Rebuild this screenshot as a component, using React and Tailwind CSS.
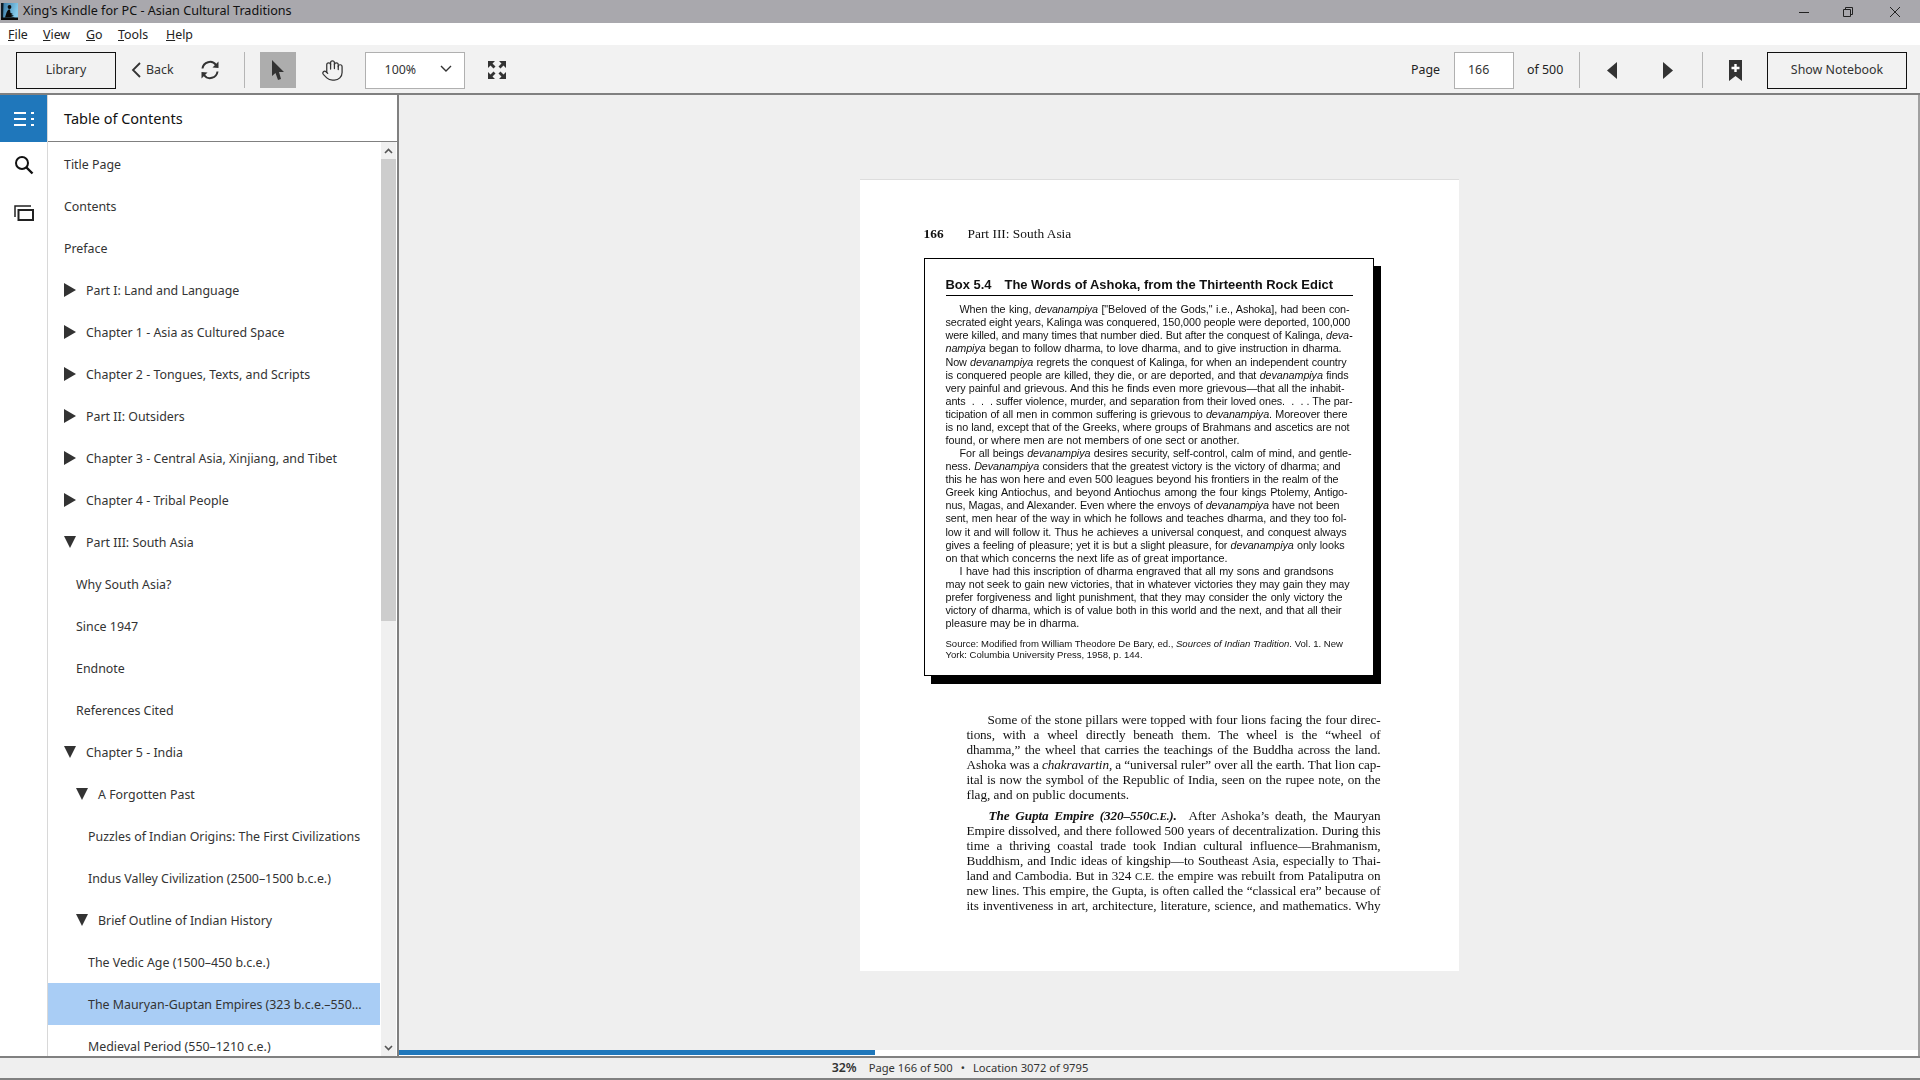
import React from 'react';
import { Hand } from 'lucide-react';

const tocItems = [
  { label: 'Title Page', pad: 'pl-[16px]' },
  { label: 'Contents', pad: 'pl-[16px]' },
  { label: 'Preface', pad: 'pl-[16px]' },
  { label: 'Part I: Land and Language', pad: 'pl-[16px]', arrow: 'right' },
  { label: 'Chapter 1 - Asia as Cultured Space', pad: 'pl-[16px]', arrow: 'right' },
  { label: 'Chapter 2 - Tongues, Texts, and Scripts', pad: 'pl-[16px]', arrow: 'right' },
  { label: 'Part II: Outsiders', pad: 'pl-[16px]', arrow: 'right' },
  { label: 'Chapter 3 - Central Asia, Xinjiang, and Tibet', pad: 'pl-[16px]', arrow: 'right' },
  { label: 'Chapter 4 - Tribal People', pad: 'pl-[16px]', arrow: 'right' },
  { label: 'Part III: South Asia', pad: 'pl-[16px]', arrow: 'down' },
  { label: 'Why South Asia?', pad: 'pl-[28px]' },
  { label: 'Since 1947', pad: 'pl-[28px]' },
  { label: 'Endnote', pad: 'pl-[28px]' },
  { label: 'References Cited', pad: 'pl-[28px]' },
  { label: 'Chapter 5 - India', pad: 'pl-[16px]', arrow: 'down' },
  { label: 'A Forgotten Past', pad: 'pl-[28px]', arrow: 'down' },
  { label: 'Puzzles of Indian Origins: The First Civilizations', pad: 'pl-[40px]' },
  { label: 'Indus Valley Civilization (2500–1500 b.c.e.)', pad: 'pl-[40px]' },
  { label: 'Brief Outline of Indian History', pad: 'pl-[28px]', arrow: 'down' },
  { label: 'The Vedic Age (1500–450 b.c.e.)', pad: 'pl-[40px]' },
  { label: 'The Mauryan-Guptan Empires (323 b.c.e.–550...', pad: 'pl-[40px]', active: true },
  { label: 'Medieval Period (550–1210 c.e.)', pad: 'pl-[40px]' },
];

// right edge of each printed line, in px from the left of the box text
const boxLines = [
  { w: 404, indent: true, c: <>When the king, <i>devanampiya</i> ["Beloved of the Gods," i.e., Ashoka], had been con-</> },
  { w: 404, c: <>secrated eight years, Kalinga was conquered, 150,000 people were deported, 100,000</> },
  { w: 407, c: <>were killed, and many times that number died. But after the conquest of Kalinga, <i>deva-</i></> },
  { w: 396, c: <><i>nampiya</i> began to follow dharma, to love dharma, and to give instruction in dharma.</> },
  { w: 401, gap: true, c: <>Now <i>devanampiya</i> regrets the conquest of Kalinga, for when an independent country</> },
  { w: 403, c: <>is conquered people are killed, they die, or are deported, and that <i>devanampiya</i> finds</> },
  { w: 399, c: <>very painful and grievous. And this he finds even more grievous—that all the inhabit-</> },
  { w: 407, c: <>ants &nbsp;. &nbsp;. &nbsp;. suffer violence, murder, and separation from their loved ones. &nbsp;. &nbsp;. . The par-</> },
  { w: 402, c: <>ticipation of all men in common suffering is grievous to <i>devanampiya</i>. Moreover there</> },
  { w: 404, c: <>is no land, except that of the Greeks, where groups of Brahmans and ascetics are not</> },
  { c: <>found, or where men are not members of one sect or another.</> },
  { w: 406, indent: true, c: <>For all beings <i>devanampiya</i> desires security, self-control, calm of mind, and gentle-</> },
  { w: 395, c: <>ness. <i>Devanampiya</i> considers that the greatest victory is the victory of dharma; and</> },
  { w: 393, c: <>this he has won here and even 500 leagues beyond his frontiers in the realm of the</> },
  { w: 402, c: <>Greek king Antiochus, and beyond Antiochus among the four kings Ptolemy, Antigo-</> },
  { w: 394, c: <>nus, Magas, and Alexander. Even where the envoys of <i>devanampiya</i> have not been</> },
  { w: 401, c: <>sent, men hear of the way in which he follows and teaches dharma, and they too fol-</> },
  { w: 401, gap: true, c: <>low it and will follow it. Thus he achieves a universal conquest, and conquest always</> },
  { w: 399, c: <>gives a feeling of pleasure; yet it is but a slight pleasure, for <i>devanampiya</i> only looks</> },
  { c: <>on that which concerns the next life as of great importance.</> },
  { w: 388, indent: true, c: <>I have had this inscription of dharma engraved that all my sons and grandsons</> },
  { w: 404, c: <>may not seek to gain new victories, that in whatever victories they may gain they may</> },
  { w: 397, c: <>prefer forgiveness and light punishment, that they may consider the only victory the</> },
  { w: 396, c: <>victory of dharma, which is of value both in this world and the next, and that all their</> },
  { c: <>pleasure may be in dharma.</> },
];

const bodyTop = [
  { indent: true, c: <>Some of the stone pillars were topped with four lions facing the four direc-</> },
  { c: <>tions, with a wheel directly beneath them. The wheel is the “wheel of</> },
  { c: <>dhamma,” the wheel that carries the teachings of the Buddha across the land.</> },
  { c: <>Ashoka was a <i>chakravartin</i>, a “universal ruler” over all the earth. That lion cap-</> },
  { c: <>ital is now the symbol of the Republic of India, seen on the rupee note, on the</> },
  { last: true, c: <>flag, and on public documents.</> },
];

const bodyBottom = [
  { indent: true, c: <><b><i>The Gupta Empire (320–550<span className="text-[11px]">C.E.</span>).</i></b> &nbsp;After Ashoka’s death, the Mauryan</> },
  { c: <>Empire dissolved, and there followed 500 years of decentralization. During this</> },
  { c: <>time a thriving coastal trade took Indian cultural influence—Brahmanism,</> },
  { c: <>Buddhism, and Indic ideas of kingship—to Southeast Asia, especially to Thai-</> },
  { c: <>land and Cambodia. But in 324 <span className="text-[11px]">C.E.</span> the empire was rebuilt from Pataliputra on</> },
  { c: <>new lines. This empire, the Gupta, is often called the “classical era” because of</> },
  { c: <>its inventiveness in art, architecture, literature, science, and mathematics. Why</> },
];

function AppIcon() {
  return (
    <svg width="17" height="17" viewBox="0 0 17 17" className="shrink-0">
      <defs>
        <linearGradient id="kindleBg" x1="0" y1="0" x2="1" y2="0.3">
          <stop offset="0" stopColor="#2f6f9c" />
          <stop offset="1" stopColor="#86cbec" />
        </linearGradient>
      </defs>
      <rect width="17" height="17" fill="url(#kindleBg)" />
      <path d="M0 0h2.500l-.5 17H0z" fill="#0c1a24" />
      <path d="M0 14.500h17V17H0z" fill="#0a0a0a" />
      <circle cx="8.500" cy="4" r="1.900" fill="#0a0a0a" />
      <path d="M7.500 6.500c-1.500 1-2.500 4.500-3.500 8h10l-4-1.500 3-.5-3-1.500 2-.5-2.500-.5-.5-3.500z" fill="#0a0a0a" />
    </svg>
  );
}

function Tri({ dir }) {
  if (dir === 'down') {
    return (
      <svg width="12" height="14" viewBox="0 0 12 14" className="shrink-0 mb-[3px]">
        <polygon points="0,1 12,1 6,13" fill="#333" />
      </svg>
    );
  }
  return (
    <svg width="12" height="14" viewBox="0 0 12 14" className="shrink-0 mb-[3px]">
      <polygon points="0,0 12,7 0,14" fill="#333" />
    </svg>
  );
}

function ToolbarSep({ className }) {
  return <div className={`w-px h-[36px] bg-[#b5b5b5] shrink-0 ${className}`} />;
}

function JustLine({ line, indent, height }) {
  const justified = line.width || line.justify;
  return (
    <div
      className={`whitespace-nowrap ${height} ${justified ? '[text-align-last:justify] tracking-[-0.1px]' : ''} ${indent && line.indent ? indent : ''} ${line.gap ? 'mt-px' : ''}`}
      style={line.width ? { width: line.width } : undefined}
    >
      {line.c}
    </div>
  );
}

function Page() {
  return (
    <div className="w-[599px] h-[792px] bg-white border-t border-[#dddddd] pl-[64px] pt-[46px] ml-px font-['Liberation_Serif',serif] text-[#111] blur-[0.3px]">
      <div className="flex text-[13.4px] leading-4 h-4">
        <span className="w-[44px] font-bold">166</span>
        <span>Part III: South Asia</span>
      </div>
      <div className="w-[450px] h-[418px] mt-[16px] border border-black shadow-[7px_8px_0_#000] pl-[21px] pt-[18px] font-['Liberation_Sans',sans-serif] bg-white">
        <div className="w-[407px] border-b border-black pb-[2px] h-[19px] flex text-[12.95px] leading-4 font-bold whitespace-nowrap">
          <span className="w-[59px]">Box 5.4</span>
          <span>The Words of Ashoka, from the Thirteenth Rock Edict</span>
        </div>
        <div className="mt-[7px] text-[10.8px] leading-[13px]">
          {boxLines.map((l, i) => (
            <JustLine key={i} line={{ ...l, width: l.w }} indent="pl-[14px]" height="h-[13px]" />
          ))}
        </div>
        <div className="mt-[8px] text-[9.55px] leading-[11px]">
          <div className="whitespace-nowrap">Source: Modified from William Theodore De Bary, ed., <i>Sources of Indian Tradition</i>. Vol. 1. New</div>
          <div className="whitespace-nowrap">York: Columbia University Press, 1958, p. 144.</div>
        </div>
      </div>
      <div className="w-[414px] ml-[43px] mt-[36px] text-[13.2px] leading-[15px]">
        {bodyTop.map((l, i) => (
          <JustLine key={i} line={{ ...l, justify: !l.last }} indent="pl-[21px]" height="h-[15px]" />
        ))}
        <div className="mt-[6px]">
          {bodyBottom.map((l, i) => (
            <JustLine key={i} line={{ ...l, justify: true }} indent="pl-[22px]" height="h-[15px]" />
          ))}
        </div>
      </div>
    </div>
  );
}

export default function App() {
  return (
    <div className="w-[1920px] h-[1080px] flex flex-col overflow-hidden bg-white font-['Noto_Sans',sans-serif] text-[12.4px] text-[#222]">
      {/* title bar */}
      <div className="h-[23px] shrink-0 bg-[#a9a8ad] flex items-center pl-[1px] text-[#111]">
        <AppIcon />
        <span className="ml-[5px] text-[12.6px] whitespace-nowrap">Xing's Kindle for PC - Asian Cultural Traditions</span>
        <div className="ml-auto flex items-center">
          <svg width="12" height="12" viewBox="0 0 12 12" className="mr-[32px]"><path d="M1 6.500h10" stroke="#222" strokeWidth="1" /></svg>
          <svg width="12" height="12" viewBox="0 0 12 12" className="mr-[35px]"><path d="M1.500 3.500h7v7h-7zM3.500 3.500v-2h7v7h-2" fill="none" stroke="#222" strokeWidth="1" /></svg>
          <svg width="12" height="12" viewBox="0 0 12 12" className="mr-[19px]"><path d="M1 1l10 10M11 1L1 11" stroke="#222" strokeWidth="1" /></svg>
        </div>
      </div>

      {/* menu bar */}
      <div className="h-[22px] shrink-0 bg-white flex items-center pl-[8px] pt-[2px] text-[#222]">
        <span className="w-[35px]"><u>F</u>ile</span>
        <span className="w-[43px]"><u>V</u>iew</span>
        <span className="w-[32px]"><u>G</u>o</span>
        <span className="w-[48px]"><u>T</u>ools</span>
        <span><u>H</u>elp</span>
      </div>

      {/* toolbar */}
      <div className="h-[50px] shrink-0 bg-[#f2f2f2] border-b-2 border-[#808080] flex items-center pl-[16px] pt-[4px] pb-[2px]">
        <div className="w-[100px] h-[37px] pt-px border border-[#111] flex items-center justify-center text-[#333]">Library</div>
        <svg width="12" height="18" viewBox="0 0 12 18" className="ml-[14px]"><path d="M10 2L3 9l7 7" fill="none" stroke="#333" strokeWidth="1.800" /></svg>
        <span className="ml-[4px] pt-px text-[#333]">Back</span>
        <svg width="20" height="20" viewBox="0 0 20 20" className="ml-[26px]">
          <path d="M2.500 8.500A7.500 7.500 0 0 1 16 5" fill="none" stroke="#333" strokeWidth="2" />
          <path d="M17.500 11.500A7.500 7.500 0 0 1 4 15" fill="none" stroke="#333" strokeWidth="2" />
          <polygon points="18.500,1.500 18.500,8 12.500,7.500" fill="#333" />
          <polygon points="1.500,18.500 1.500,12 7.500,12.500" fill="#333" />
        </svg>
        <ToolbarSep className="ml-[24px]" />
        <div className="w-[36px] h-[36px] ml-[15px] bg-[#adadad] flex items-center justify-center">
          <svg width="14" height="20" viewBox="0 0 14 20"><path d="M1 0l12 12H8l2 7-3 1-2.500-7L1 16z" fill="#333" /></svg>
        </div>
        <Hand size={23} strokeWidth={1.3} color="#333" className="ml-[25px] shrink-0" />
        <div className="w-[100px] h-[37px] ml-[21px] bg-white border border-[#b0b0b0] flex items-center pl-[19px] text-[#333]">
          <span className="pt-px">100%</span>
          <svg width="12" height="8" viewBox="0 0 12 8" className="ml-[24px] mb-[2px]"><path d="M1 1l5 5 5-5" fill="none" stroke="#333" strokeWidth="1.400" /></svg>
        </div>
        <svg width="20" height="20" viewBox="0 0 20 20" className="ml-[22px]">
          <g fill="#333">
            <polygon points="1,1 8,1 5.500,3.500 8.500,6.500 6.500,8.500 3.500,5.500 1,8" />
            <polygon points="19,1 19,8 16.500,5.500 13.500,8.500 11.500,6.500 14.500,3.500 12,1" />
            <polygon points="1,19 1,12 3.500,14.500 6.500,11.500 8.500,13.500 5.500,16.500 8,19" />
            <polygon points="19,19 12,19 14.500,16.500 11.500,13.500 13.500,11.500 16.500,14.500 19,12" />
          </g>
        </svg>

        <span className="ml-auto text-[#222]">Page</span>
        <div className="w-[60px] h-[37px] ml-[14px] pt-px bg-white border border-[#b0b0b0] flex items-center pl-[13px] text-[#333]">166</div>
        <span className="ml-[13px] w-[52px] text-[#222]">of 500</span>
        <ToolbarSep />
        <svg width="12" height="17" viewBox="0 0 12 17" className="ml-[26px]"><polygon points="11,0 11,17 1,8.500" fill="#333" /></svg>
        <svg width="12" height="17" viewBox="0 0 12 17" className="ml-[44px]"><polygon points="1,0 1,17 11,8.500" fill="#333" /></svg>
        <ToolbarSep className="ml-[28px]" />
        <svg width="13" height="21" viewBox="0 0 13 21" className="ml-[26px]">
          <path d="M0 0h13v21l-6.500-5L0 21z" fill="#333" />
          <path d="M5.300 4h2.400v2.800h2.800v2.400H7.700V12H5.300V9.200H2.500V6.800h2.800z" fill="#fff" />
        </svg>
        <div className="w-[140px] h-[37px] ml-[25px] mr-[13px] pt-px border border-[#111] flex items-center justify-center text-[#333]">Show Notebook</div>
      </div>

      {/* main */}
      <div className="flex-1 min-h-0 flex">
        <div className="w-[48px] shrink-0 bg-white border-r border-[#d8d8d8] flex flex-col">
          <div className="h-[47px] bg-[#1f77bb] flex items-center justify-center">
            <svg width="20" height="16" viewBox="0 0 20 16">
              <g fill="#fff">
                <rect x="0" y="1" width="12" height="2" />
                <rect x="0" y="7" width="12" height="2" />
                <rect x="0" y="13" width="12" height="2" />
                <rect x="17" y="1" width="3" height="2" />
                <rect x="17" y="7" width="3" height="2" />
                <rect x="17" y="13" width="3" height="2" />
              </g>
            </svg>
          </div>
          <div className="h-[46px] flex items-center justify-center">
            <svg width="20" height="20" viewBox="0 0 20 20">
              <circle cx="8" cy="8" r="6" fill="none" stroke="#111" strokeWidth="2" />
              <path d="M12.500 12.500L18.500 18.500" stroke="#111" strokeWidth="2.400" />
            </svg>
          </div>
          <div className="h-[49px] flex items-center justify-center">
            <svg width="20" height="16" viewBox="0 0 20 16">
              <path d="M1 12V1h16" fill="none" stroke="#222" strokeWidth="1.500" />
              <rect x="4.500" y="5" width="14.500" height="10" fill="none" stroke="#222" strokeWidth="2" />
            </svg>
          </div>
        </div>

        <div className="w-[349px] shrink-0 bg-white flex flex-col min-h-0">
          <div className="h-[47px] shrink-0 border-b border-[#808080] flex items-center pl-[16px] pt-[2px] text-[14.5px] text-[#111]">Table of Contents</div>
          <div className="flex-1 min-h-0 flex">
            <div className="w-[332px] overflow-hidden pt-px">
              {tocItems.map((item) => (
                <div
                  key={item.label}
                  className={`h-[42px] pt-[2px] flex items-center whitespace-nowrap text-[#333] ${item.pad} ${item.active ? 'bg-[#a9cdf5]' : ''}`}
                >
                  {item.arrow && <Tri dir={item.arrow} />}
                  <span className={item.arrow ? 'ml-[10px]' : ''}>{item.label}</span>
                </div>
              ))}
            </div>
            <div className="w-[15px] ml-px bg-[#f0f0f0] flex flex-col items-center">
              <div className="h-[17px] flex items-center">
                <svg width="9" height="6" viewBox="0 0 9 6"><path d="M1 5l3.500-3.500L8 5" fill="none" stroke="#555" strokeWidth="1.600" /></svg>
              </div>
              <div className="w-full h-[462px] bg-[#cdcdcd]" />
              <div className="mt-auto h-[17px] flex items-center">
                <svg width="9" height="6" viewBox="0 0 9 6"><path d="M1 1l3.500 3.500L8 1" fill="none" stroke="#555" strokeWidth="1.600" /></svg>
              </div>
            </div>
          </div>
        </div>

        {/* reader */}
        <div className="flex-1 min-w-0 flex flex-col border-l-2 border-r-2 border-l-[#808080] border-r-[#a0a0a0] bg-[#efefef]">
          <div className="flex-1 min-h-0 pt-[84px] flex justify-center">
            <Page />
          </div>
          <div className="h-[6px] shrink-0 bg-white">
            <div className="w-[476px] h-[5px] bg-[#1f77bb]" />
          </div>
        </div>
      </div>

      {/* status bar */}
      <div className="h-[24px] shrink-0 bg-[#efefef] border-t-2 border-b-2 border-[#808080] flex items-center justify-center pt-px text-[11.2px] text-[#333]">
        <span className="font-semibold text-[12.4px] mr-[12px]">32%</span>
        <span>Page 166 of 500</span>
        <span className="mx-[8px]">•</span>
        <span>Location 3072 of 9795</span>
      </div>
    </div>
  );
}
